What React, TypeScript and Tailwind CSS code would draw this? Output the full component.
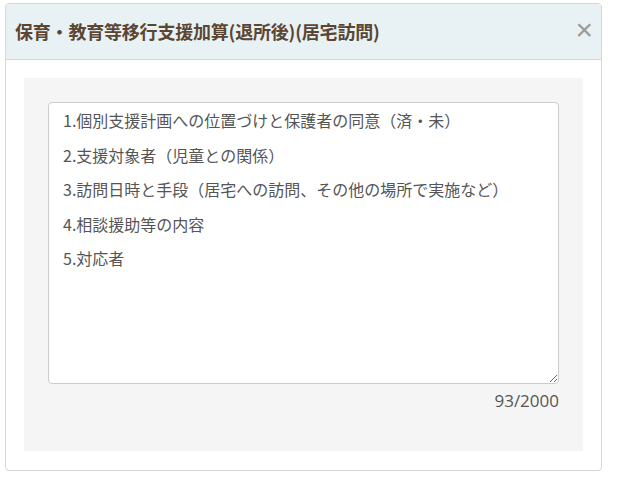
import React, { useState } from "react";

const initialText = [
  "1.個別支援計画への位置づけと保護者の同意（済・未）",
  "2.支援対象者（児童との関係）",
  "3.訪問日時と手段（居宅への訪問、その他の場所で実施など）",
  "4.相談援助等の内容",
  "5.対応者",
].join("\n");

const App = () => {
  const [text, setText] = useState<string>(initialText);

  // line breaks are counted as CRLF, like the server does
  const count = text.replace(/\n/g, "\r\n").length;

  return (
    <div className="w-[618px] h-[484px] bg-white pt-[3px] pl-[5px] font-['Noto_Sans_CJK_JP',sans-serif]">
      <div className="w-[597px] h-[468px] border border-[#d6d6d6] rounded-[4px] overflow-hidden flex flex-col">
        <div className="h-[56px] shrink-0 bg-[#e8f1f3] border-b border-[#d6d6d6] flex items-center justify-between pl-[9px] pr-[8px]">
          <h2 className="text-[18px] font-bold text-[#5b4634] tracking-[-0.2px]">
            保育・教育等移行支援加算(退所後)(居宅訪問)
          </h2>
          <button className="text-[30px] leading-none text-[#9a9a9a] font-['Liberation_Sans',sans-serif] pb-[3px]">
            ×
          </button>
        </div>
        <div className="flex-1 p-[18px]">
          <div className="h-[373px] bg-[#f5f5f5] pt-[24px] px-[24px]">
            <textarea
              value={text}
              onChange={(e) => setText(e.target.value)}
              className="block w-full h-[282px] bg-white border border-[#cccccc] rounded-[4px] px-[14px] pt-0 text-[16px] leading-[34.5px] text-[#555555] outline-none resize"
            />
            <div className="text-right text-[17px] leading-[34px] text-[#555555] font-['Open_Sans',sans-serif]">
              {count}/2000
            </div>
          </div>
        </div>
      </div>
    </div>
  );
};

export default App;
